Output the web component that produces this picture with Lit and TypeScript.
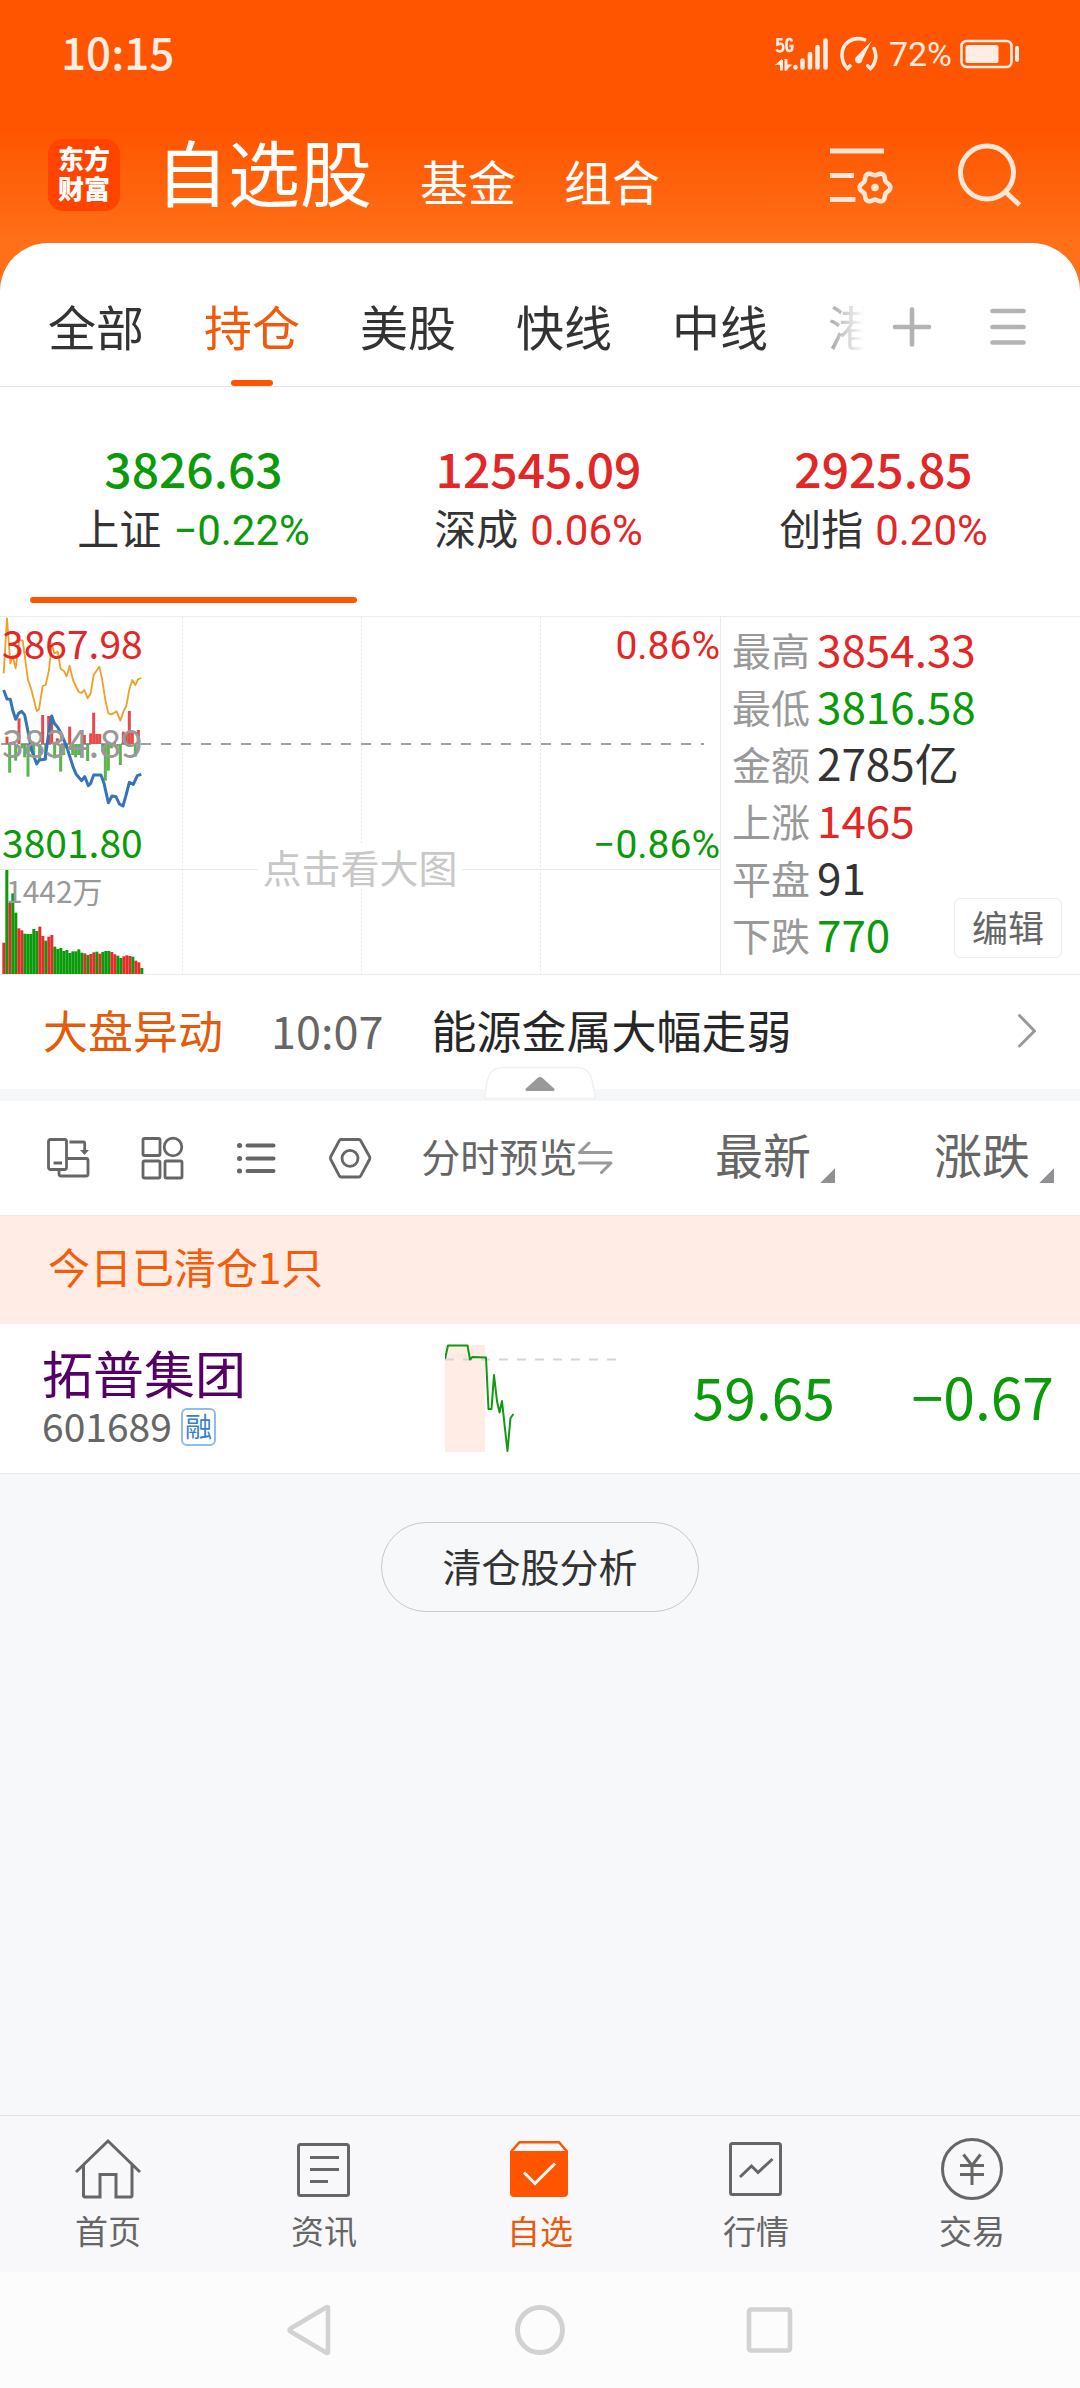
import { LitElement, html, css, svg, nothing } from "lit";
import { customElement, state } from "lit/decorators.js";
import { classMap } from "lit/directives/class-map.js";

type Trend = "up" | "down" | "flat";

const GROUPS = ["全部", "持仓", "美股", "快线", "中线", "港股"];

const INDEXES: { name: string; value: string; change: string; trend: Trend }[] = [
  { name: "上证", value: "3826.63", change: "−0.22%", trend: "down" },
  { name: "深成", value: "12545.09", change: "0.06%", trend: "up" },
  { name: "创指", value: "2925.85", change: "0.20%", trend: "up" },
];

const STATS: { label: string; value: string; trend: Trend }[] = [
  { label: "最高", value: "3854.33", trend: "up" },
  { label: "最低", value: "3816.58", trend: "down" },
  { label: "金额", value: "2785亿", trend: "flat" },
  { label: "上涨", value: "1465", trend: "up" },
  { label: "平盘", value: "91", trend: "flat" },
  { label: "下跌", value: "770", trend: "down" },
];

// Chart series are kept in a 3x grid and scaled down when drawn.
const AVERAGE =
  "11,220 21,55 31,190 38,168 47,205 58,120 68,122 84,240 93,265 110,333 117,328 128,258 137,255 147,210 155,130 163,160 173,155 182,207 192,213 200,229 209,198 219,240 236,276 244,279 253,270 263,295 272,280 281,225 298,200 306,235 316,300 325,340 334,343 350,334 361,362 370,335 379,318 388,268 397,240 406,255 414,238 424,234";
const PRICE =
  "11,270 21,297 31,298 38,330 47,358 56,340 65,334 74,345 84,395 95,450 110,492 118,480 135,478 146,400 155,348 163,370 173,382 182,398 200,440 219,500 228,522 245,542 254,530 265,557 272,550 281,525 303,525 312,550 325,608 336,588 348,590 358,612 369,618 377,590 388,547 400,553 412,527 424,523";
const MOMENTUM: [number, number][] = [
  [21, 410], [29, 518], [47, 482], [57, 355], [66, 445], [74, 472], [84, 530], [92, 455], [101, 470],
  [119, 478], [128, 345], [137, 480], [146, 348], [155, 348], [164, 475], [172, 415], [182, 515],
  [191, 465], [200, 445], [209, 380], [218, 465], [227, 472], [236, 465], [245, 470], [253, 405],
  [263, 483], [272, 400], [281, 338], [290, 402], [299, 402], [308, 455], [316, 542], [325, 512],
  [334, 445], [343, 425], [352, 440], [361, 495], [370, 395], [379, 400], [388, 333], [397, 398],
  [406, 470], [415, 390],
];
const VOLUME =
  "1028r 810g 908r 880g 938g 985r 991r 1001g 1002g 1002g 987g 993g 980r 1008r 1022g 1010r 1005r 1040g 1047g 1044g 1053g 1050g 1059g 1054g 1054g 1048g 1058g 1060r 1065g 1062r 1057r 1055g 1061r 1056g 1053g 1053g 1056r 1063r 1067g 1074g 1069r 1066r 1068r 1070g 1082r 1087r 1104g"
    .split(" ")
    .map((v) => ({ top: parseInt(v, 10), rise: v.endsWith("r") }));

const gearPath = (cx: number, cy: number) => {
  const pts: string[] = [];
  for (let i = 0; i < 72; i++) {
    const a = (i * Math.PI) / 36;
    const r = 13.8 + 1.6 * Math.cos(6 * a);
    pts.push(`${(cx + r * Math.cos(a)).toFixed(2)} ${(cy + r * Math.sin(a)).toFixed(2)}`);
  }
  return `M${pts.join("L")}Z`;
};

const NAV = [
  {
    label: "首页",
    icon: svg`<path d="M1 36L33 5L65 36M8.500 29V59.500a1.500 1.500 0 0 0 1.500 1.500H25V38.500H41V61H55.500a1.500 1.500 0 0 0 1.500-1.500V29"/>`,
  },
  {
    label: "资讯",
    icon: svg`<rect x="7.500" y="8.500" width="50" height="51" rx="2"/><path d="M19 21.500H48M19 33.500H48M19 45.500H37"/>`,
  },
  {
    label: "自选",
    icon: svg`<path fill="currentColor" stroke="none" d="M3 15H61V57a4 4 0 0 1-4 4H7a4 4 0 0 1-4-4Z"/><path d="M4.200 15.500L12.500 6.200H52L60 15.500" stroke-width="2.500"/><path stroke="#fff" d="M17 36.500L28 47.500L48 27.500"/>`,
  },
  {
    label: "行情",
    icon: svg`<rect x="7.500" y="7.500" width="50" height="51" rx="2"/><path d="M17 41L28.500 30L35 36.500L49.500 23"/>`,
  },
  {
    label: "交易",
    icon: svg`<circle cx="33" cy="33" r="29.500"/><path d="M24.500 18.500L33 29.500L41.500 18.500M21 29.500H45M21 38.500H45M33 29.500V49"/>`,
  },
];

@customElement("app-root")
export class AppRoot extends LitElement {
  @state() private group = 1;
  @state() private index = 0;
  @state() private page = 2;

  static styles = css`
    :host {
      display: flex;
      flex-direction: column;
      min-height: 100vh;
      background: #f7f8fa;
      color: #333;
      font-family: "Noto Sans CJK SC", sans-serif;
      --up: #e32626;
      --down: #0a9a0a;
      --brand: #f05a0a;
    }
    * { box-sizing: border-box; }
    button, a {
      font: inherit;
      color: inherit;
      background: none;
      border: 0;
      padding: 0;
      margin: 0;
      text-decoration: none;
      cursor: pointer;
    }
    svg { display: block; fill: none; stroke: currentColor; }
    .up { color: var(--up); }
    .down { color: var(--down); }
    .pct { font-family: Roboto, "Noto Sans CJK SC", sans-serif; }

    .top {
      background: linear-gradient(#ff5500 0 130px, #ff7018 243px);
      color: #fff;
    }
    .status {
      display: flex;
      align-items: center;
      justify-content: space-between;
      height: 102px;
      padding: 0 60px 0 61px;
      color: #ffece2;
    }
    .clock { font-size: 44px; line-height: 48px; font-weight: 500; }
    .signals { display: flex; align-items: center; gap: 10px; padding-top: 6px; }
    .battery { display: flex; align-items: center; gap: 8px; font-size: 34px; line-height: 36px; }
    .head { display: flex; align-items: center; padding: 5px 57px 0 48px; height: 141px; }
    .logo {
      width: 72px;
      height: 72px;
      border-radius: 15px;
      background: #ff4400;
      font-size: 26px;
      line-height: 30px;
      font-weight: 900;
      text-align: center;
      padding: 4px 8px;
    }
    .sections { display: flex; align-items: baseline; flex: 1; gap: 48px; padding-left: 36px; }
    .section { font-size: 48px; line-height: 72px; }
    .section.main { font-size: 72px; }
    .actions { display: flex; gap: 64px; color: #ffe6d6; }

    .sheet { background: #fff; border-radius: 48px 48px 0 0; }
    .backing { background: #ff7018; }
    .groups {
      display: flex;
      height: 144px;
      padding: 20px 24px 0 48px;
      border-bottom: 1px solid #e2e4e6;
    }
    .group-list {
      display: flex;
      flex: 1;
      gap: 60px;
      overflow: hidden;
      -webkit-mask-image: linear-gradient(90deg, #000 calc(100% - 80px), transparent);
      mask-image: linear-gradient(90deg, #000 calc(100% - 80px), transparent);
    }
    .group { position: relative; flex: none; font-size: 48px; line-height: 60px; }
    .group.on { color: var(--brand); }
    .group.on::after {
      content: "";
      position: absolute;
      left: calc(50% - 21px);
      bottom: 0;
      width: 42px;
      height: 6px;
      border-radius: 3px;
      background: #ff5500;
    }
    .tool { width: 96px; display: grid; place-items: center; color: #b3b3b3; padding-top: 5px; }

    .indexes {
      display: grid;
      grid-template-columns: repeat(3, 1fr);
      gap: 18px;
      padding: 50px 33px 13px 30px;
    }
    .index { display: flex; flex-direction: column; align-items: center; }
    .index strong { font-size: 48px; line-height: 60px; font-weight: 500; }
    .index-label { display: flex; align-items: baseline; gap: 12px; height: 60px; font-size: 42px; line-height: 60px; }
    .bar { width: 100%; height: 6px; margin-top: 40px; border-radius: 3px; }
    .on > .bar { background: #ff5500; }

    .quote {
      display: grid;
      grid-template-columns: 2fr 1fr;
      height: 359px;
      border-top: 1px solid #ececec;
      border-bottom: 1px solid #ececec;
    }
    .chart { position: relative; display: block; text-align: left; }
    .chart > svg { width: 100%; height: 100%; }
    .mark { position: absolute; font-size: 39px; line-height: 42px; }
    .left { left: 2px; }
    .right { right: 0; }
    .high { top: 4px; }
    .mid { top: 103px; color: #999; }
    .low { top: 203px; }
    .vol { left: 6px; top: 252px; font-size: 30px; color: #999; }
    .hint {
      left: 50%;
      top: 228px;
      transform: translateX(-50%);
      padding: 0 5px;
      background: #fff;
      color: #c8c8c8;
      white-space: nowrap;
    }
    .stats { position: relative; border-left: 1px solid #ececec; padding: 3px 0 0 11px; margin: 0; }
    .stat { display: flex; align-items: center; gap: 7px; height: 57px; }
    .stat dt { font-size: 39px; color: #999; }
    .stat dd { margin: 0; font-size: 44px; line-height: 57px; }
    .edit {
      position: absolute;
      right: 18px;
      bottom: 16px;
      width: 108px;
      height: 60px;
      border: 1px solid #ececec;
      border-radius: 6px;
      background: #fff;
      color: #666;
      font-size: 36px;
      line-height: 54px;
      padding-bottom: 4px;
    }

    .news {
      display: flex;
      align-items: center;
      width: 100%;
      height: 114px;
      padding: 0 43px 5px;
      font-size: 45px;
      line-height: 60px;
      color: #262626;
    }
    .news-tag { color: #e65a0c; margin-right: 48px; }
    .news-time { color: #666; margin-right: 48px; }
    .news-text { flex: 1; text-align: left; }
    .news svg { color: #999; }
    .band { position: relative; height: 12px; background: #f5f7f9; }
    .fold { position: absolute; left: calc(50% - 57px); bottom: 1px; }

    table { width: 100%; border-collapse: collapse; table-layout: fixed; background: #fff; }
    th, td { padding: 0; font-weight: 400; text-align: left; }
    .c-name { width: 39%; }
    .c-price { width: 220px; }
    .c-change { width: 245px; }
    .cols th { height: 114px; color: #666; border-bottom: 1px solid #e8ebee; }
    .views { display: flex; gap: 50px; padding-left: 46px; }
    .preview { display: flex; align-items: center; font-size: 39px; line-height: 60px; white-space: nowrap; }
    .preview span { padding-bottom: 6px; }
    .preview svg { color: #999; }
    .sort { display: flex; align-items: center; justify-content: flex-end; gap: 9px; width: 100%; font-size: 48px; line-height: 60px; }
    .sort span { padding-bottom: 9px; }
    .sort i { align-self: flex-end; width: 15px; height: 15px; margin-bottom: 9px; background: #8f8f94; clip-path: polygon(100% 0, 100% 100%, 0 100%); }
    .edge { padding-right: 26px; }
    .cleared td {
      height: 109px;
      padding: 0 48px 8px;
      background: #ffede5;
      color: #f55c0a;
      font-size: 42px;
      line-height: 60px;
    }
    .stock td { height: 149px; border-bottom: 1px solid #e8ebee; }
    .name { display: block; padding-left: 42px; font-size: 51px; line-height: 54px; color: #550066; }
    .code { display: flex; align-items: center; gap: 9px; padding-left: 42px; font-size: 39px; line-height: 52px; color: #666; }
    .badge {
      width: 35px;
      height: 38px;
      margin-top: 4px;
      border: 2px solid #8fbce8;
      border-radius: 6px;
      color: #3a80c8;
      font-size: 27px;
      line-height: 32px;
      text-align: center;
      display: grid;
      justify-content: center;
    }
    .stock .spark { padding: 3px 0 0 24px; }
    .stock .num { font-size: 57px; line-height: 60px; text-align: right; padding-bottom: 6px; }

    .analysis { flex: 1; display: flex; justify-content: center; align-items: flex-start; padding: 48px 0; }
    .pill {
      height: 90px;
      padding: 0 60px 4px;
      border: 1px solid #c8c8cc;
      border-radius: 45px;
      font-size: 39px;
      line-height: 60px;
    }

    .nav {
      display: grid;
      grid-template-columns: repeat(5, 1fr);
      border-top: 1px solid #e0e3e6;
      background: #f8f8fa;
      padding: 20px 0 24px;
      color: #666;
    }
    .nav a { display: flex; flex-direction: column; align-items: center; gap: 10px; font-size: 33px; line-height: 36px; }
    .nav a.on { color: #e85a10; }
    .nav a.on svg { color: #ff5500; }
    .system {
      display: flex;
      justify-content: center;
      align-items: center;
      gap: 180px;
      height: 116px;
      background: #fcfcfc;
      color: #d2d2d2;
    }
  `;

  private renderStatus() {
    return html`
      <div class="status">
        <span class="clock">10:15</span>
        <div class="signals">
          <svg width="54" height="36" viewBox="0 0 54 36" stroke="none" aria-label="5G">
            <path stroke-width="2.600" d="M7.500 3.300H2.500V8.500C7.500 6.500 8.500 9 8.200 12C8 16 3 16.500 1.500 13.500M17 5.500C16 2 11.500 2 11.500 7V11C11.500 16.500 17.300 16 17.300 12V10H14.500" />
            <path stroke-width="3" d="M6.500 34.500V24M11 23V34.500" />
            <path fill="currentColor" stroke="none" d="M0 29L7 22.800V29ZM10.500 28.500H17.500L10.500 35Z" />
            <path stroke-width="4.600" stroke-linecap="round" d="M20.500 31V31.500M27.500 24.500V31.500M35 18V31.500M42.500 11V31.500M50.500 4.500V31.500" />
          </svg>
          <svg width="40" height="36" viewBox="0 0 40 36">
            <path stroke-width="3.600" stroke-linecap="round" d="M25.500 3.800C13 -.5 2.500 8 3 19.500C3.300 25 5 29.500 8.500 32.500L11 30M35 12.500C38.500 20 36.500 28 31.500 32.500L28.800 30" />
            <path fill="currentColor" stroke="none" d="M32.500 5L23.500 23.500A3.800 3.800 0 1 1 17.500 20.500Z" />
          </svg>
          <div class="battery">
            <span class="pct">72%</span>
            <svg width="60" height="30" viewBox="0 0 60 30">
              <rect x="1.500" y="2" width="50" height="26" rx="5" stroke-width="2.600" />
              <rect x="5.500" y="6" width="33" height="18" rx="2" fill="currentColor" stroke="none" />
              <rect x="55" y="7" width="4" height="16" rx="2" fill="currentColor" stroke="none" />
            </svg>
          </div>
        </div>
      </div>
    `;
  }

  private renderHead() {
    return html`
      <div class="head">
        <div class="logo">东方<br />财富</div>
        <nav class="sections">
          <a class="section main" href="#stocks">自选股</a>
          <a class="section" href="#funds">基金</a>
          <a class="section" href="#portfolios">组合</a>
        </nav>
        <div class="actions">
          <button aria-label="设置">
            <svg width="66" height="66" viewBox="0 0 66 66" stroke-width="5">
              <path d="M3 9H57M3 33.500H27M3 57.500H28.500" />
              <path stroke-width="4.600" stroke-linejoin="round" d=${gearPath(48, 45.5)} />
              <circle cx="48" cy="45.500" r="3.800" fill="currentColor" stroke="none" />
            </svg>
          </button>
          <button aria-label="搜索">
            <svg width="66" height="66" viewBox="0 0 66 66" stroke-width="5">
              <circle cx="30" cy="30.500" r="26.500" /><path d="M48 49.500L62.500 63" />
            </svg>
          </button>
        </div>
      </div>
    `;
  }

  private renderChart() {
    return svg`
      <svg viewBox="0 0 720 357" preserveAspectRatio="none">
        <path stroke="#e8e8e8" stroke-dasharray="2 2" d="M182.500 0V357M361.500 0V357M540.500 0V357" />
        <path stroke="#e8e8e8" d="M0 252.500H720" />
        <g transform="translate(0,-17) scale(.33333)">
          ${MOMENTUM.map(([x, y]) =>
            y < 432
              ? svg`<rect stroke="none" fill="#e84a4a" x=${x - 4.5} y=${y} width="9" height=${432 - y} />`
              : svg`<rect stroke="none" fill="#5cb450" x=${x - 4.5} y="432" width="9" height=${y - 432} />`
          )}
          <path stroke="#808080" stroke-width="5" stroke-dasharray="30 30" d="M3 432H2112" />
          ${VOLUME.map(
            (v, i) => svg`<rect stroke="none" fill=${v.rise ? "#e82c2c" : "#0a9a0a"} x=${7 + i * 9} y=${v.top} width="9" height=${1122 - v.top} />`
          )}
          <polyline stroke="#eca22a" stroke-width="5.500" stroke-linejoin="round" points=${AVERAGE} />
          <polyline stroke="#3574b8" stroke-width="9" stroke-linejoin="round" points=${PRICE} />
        </g>
      </svg>
    `;
  }

  private renderQuote() {
    return html`
      <div class="quote">
        <button class="chart">
          ${this.renderChart()}
          <span class="mark left high up">3867.98</span>
          <span class="mark right high up"><span class="pct">0.86%</span></span>
          <span class="mark left mid">3834.89</span>
          <span class="mark left low down">3801.80</span>
          <span class="mark right low down"><span class="pct">−0.86%</span></span>
          <span class="mark vol">1442万</span>
          <span class="mark hint">点击看大图</span>
        </button>
        <dl class="stats">
          ${STATS.map(
            (s) => html`<div class="stat"><dt>${s.label}</dt><dd class=${s.trend}>${s.value}</dd></div>`
          )}
          <button class="edit">编辑</button>
        </dl>
      </div>
    `;
  }

  private renderTable() {
    return html`
      <table>
        <colgroup><col class="c-name" /><col /><col class="c-price" /><col class="c-change" /></colgroup>
        <thead>
          <tr class="cols">
            <th>
              <div class="views">
                <button aria-label="横屏">
                  <svg width="44" height="44" viewBox="0 0 44 44" stroke-width="2.800">
                    <rect x="2.500" y="3.500" width="18" height="30" rx="2" /><path d="M7.500 27H16M23.500 6H37.500a1.200 1.200 0 0 1 1.200 1.200V15M21 22.500H40a2 2 0 0 1 2 2V38a2 2 0 0 1-2 2H15a2 2 0 0 1-2-2V34" />
                    <path d="M34 14h9l-4.500 5z" fill="currentColor" stroke="none" />
                  </svg>
                </button>
                <button aria-label="宫格">
                  <svg width="44" height="44" viewBox="0 0 44 44" stroke-width="2.800">
                    <rect x="3" y="2.500" width="17" height="17" rx="1.500" /><circle cx="33" cy="11" r="8.800" />
                    <rect x="3" y="25" width="17" height="17" rx="1.500" /><rect x="25" y="25" width="17" height="17" rx="1.500" />
                  </svg>
                </button>
                <button aria-label="列表">
                  <svg width="44" height="44" viewBox="0 0 44 44" stroke-width="4" stroke-linecap="round">
                    <path d="M13.500 9.500H39.500M13.500 22.500H39.500M13.500 35H39.500" />
                    <path stroke-width="5" d="M5.500 9.500h.1M5.500 22.500h.1M5.500 35h.1" />
                  </svg>
                </button>
                <button aria-label="设置列表">
                  <svg width="44" height="44" viewBox="0 0 44 44" stroke-width="2.800" stroke-linejoin="round">
                    <path d="M13 3.500H31Q32 3.500 32.700 4.700L41.500 20.500Q42.300 22 41.500 23.500L32.700 39.800Q32 41 31 41H13Q12 41 11.300 39.800L2.800 23.500Q2 22 2.800 20.500L11.300 4.700Q12 3.500 13 3.500Z" /><circle cx="22" cy="22.300" r="8" />
                  </svg>
                </button>
              </div>
            </th>
            <th>
              <button class="preview">
                <span>分时预览</span>
                <svg width="36" height="34" viewBox="0 0 36 34" stroke-width="3" stroke-linecap="round" stroke-linejoin="round">
                  <path d="M12 2L2.500 11.500H34M2.500 22H34L24.500 31.500" />
                </svg>
              </button>
            </th>
            <th><button class="sort"><span>最新</span><i></i></button></th>
            <th class="edge"><button class="sort"><span>涨跌</span><i></i></button></th>
          </tr>
        </thead>
        <tbody>
          <tr class="cleared"><td colspan="4">今日已清仓1只</td></tr>
          <tr class="stock">
            <td>
              <a class="name" href="#601689">拓普集团</a>
              <span class="code">601689<span class="badge">融</span></span>
            </td>
            <td class="spark">
              <svg width="172" height="112" viewBox="0 0 172 112">
                <rect x="0" y="1" width="40" height="107" fill="#ffede5" stroke="none" />
                <path stroke="#d3d6da" stroke-width="2" stroke-dasharray="9 9" d="M0 15.500H172" />
                <polyline stroke="#0f9a0f" stroke-width="2" stroke-linejoin="round" points="0,15 3,1.500 22.500,1.500 25,15.500 27.500,13 41,13.500 43.500,65 46.500,65 49,31 52,57 54.500,68.500 57,57 60,85 62.500,107 65.500,74 68.500,70" />
              </svg>
            </td>
            <td class="num down">59.65</td>
            <td class="num down edge">−0.67</td>
          </tr>
        </tbody>
      </table>
    `;
  }

  render() {
    return html`
      <header class="top">${this.renderStatus()}${this.renderHead()}</header>
      <div class="backing">
        <main class="sheet">
          <div class="groups">
            <nav class="group-list">
              ${GROUPS.map(
                (g, i) => html`<button class=${classMap({ group: true, on: i === this.group })} @click=${() => (this.group = i)}>${g}</button>`
              )}
            </nav>
            <button class="tool" aria-label="添加分组">
              <svg width="40" height="42" viewBox="0 0 40 42" stroke-width="4.600" stroke-linecap="round"><path d="M3 21H37M20 3.500V38.500" /></svg>
            </button>
            <button class="tool" aria-label="管理分组">
              <svg width="40" height="42" viewBox="0 0 40 42" stroke-width="4.600" stroke-linecap="round"><path d="M4.500 5H35.500M4.500 21H35.500M4.500 36.500H35.500" /></svg>
            </button>
          </div>
          <div class="indexes">
            ${INDEXES.map(
              (x, i) => html`
                <button class=${classMap({ index: true, on: i === this.index })} @click=${() => (this.index = i)}>
                  <strong class=${x.trend}>${x.value}</strong>
                  <span class="index-label"><span>${x.name}</span><span class="pct ${x.trend}">${x.change}</span></span>
                  <span class="bar"></span>
                </button>
              `
            )}
          </div>
          ${this.renderQuote()}
          <a class="news" href="#news">
            <span class="news-tag">大盘异动</span>
            <span class="news-time">10:07</span>
            <span class="news-text">能源金属大幅走弱</span>
            <svg width="20" height="36" viewBox="0 0 20 36" stroke-width="3" stroke-linecap="round" stroke-linejoin="round"><path d="M2.500 3.500L17.500 19L2.500 34" /></svg>
          </a>
          <div class="band">
            <button class="fold" aria-label="收起">
              <svg width="114" height="34" viewBox="0 0 114 34">
                <path fill="#fff" stroke="#eff1f3" stroke-width="1.500" d="M1.500 32.500L4 16Q7 1.500 20 1.500H94Q106 1.500 109 14L112.500 32.500Z" />
                <path fill="#999" stroke="none" d="M54.500 12Q57 10 59.500 12L71 22.500Q72.500 25 70 25H44Q41.500 25 43 22.500Z" />
              </svg>
            </button>
          </div>
          ${this.renderTable()}
        </main>
      </div>
      <div class="analysis"><button class="pill">清仓股分析</button></div>
      <nav class="nav">
        ${NAV.map(
          (n, i) => html`
            <a href="#tab${i}" class=${i === this.page ? "on" : nothing} @click=${() => (this.page = i)}>
              <svg width="66" height="66" viewBox="0 0 66 66" stroke-width="3">${n.icon}</svg>
              <span>${n.label}</span>
            </a>
          `
        )}
      </nav>
      <div class="system">
        <button aria-label="返回">
          <svg width="50" height="52" viewBox="0 0 50 52" stroke-width="4.600" stroke-linejoin="round"><path d="M43 3.500V48.500Q42.500 49.500 41 48.500L5.500 27.500Q3.500 26 5.500 24.500L41 3.500Q42.500 2.500 43 3.500Z" /></svg>
        </button>
        <button aria-label="主屏幕">
          <svg width="50" height="52" viewBox="0 0 50 52" stroke-width="5"><circle cx="25" cy="26" r="22.500" /></svg>
        </button>
        <button aria-label="最近任务">
          <svg width="50" height="52" viewBox="0 0 50 52" stroke-width="4.600"><rect x="4" y="5.500" width="41" height="41" rx="2" /></svg>
        </button>
      </div>
    `;
  }
}
